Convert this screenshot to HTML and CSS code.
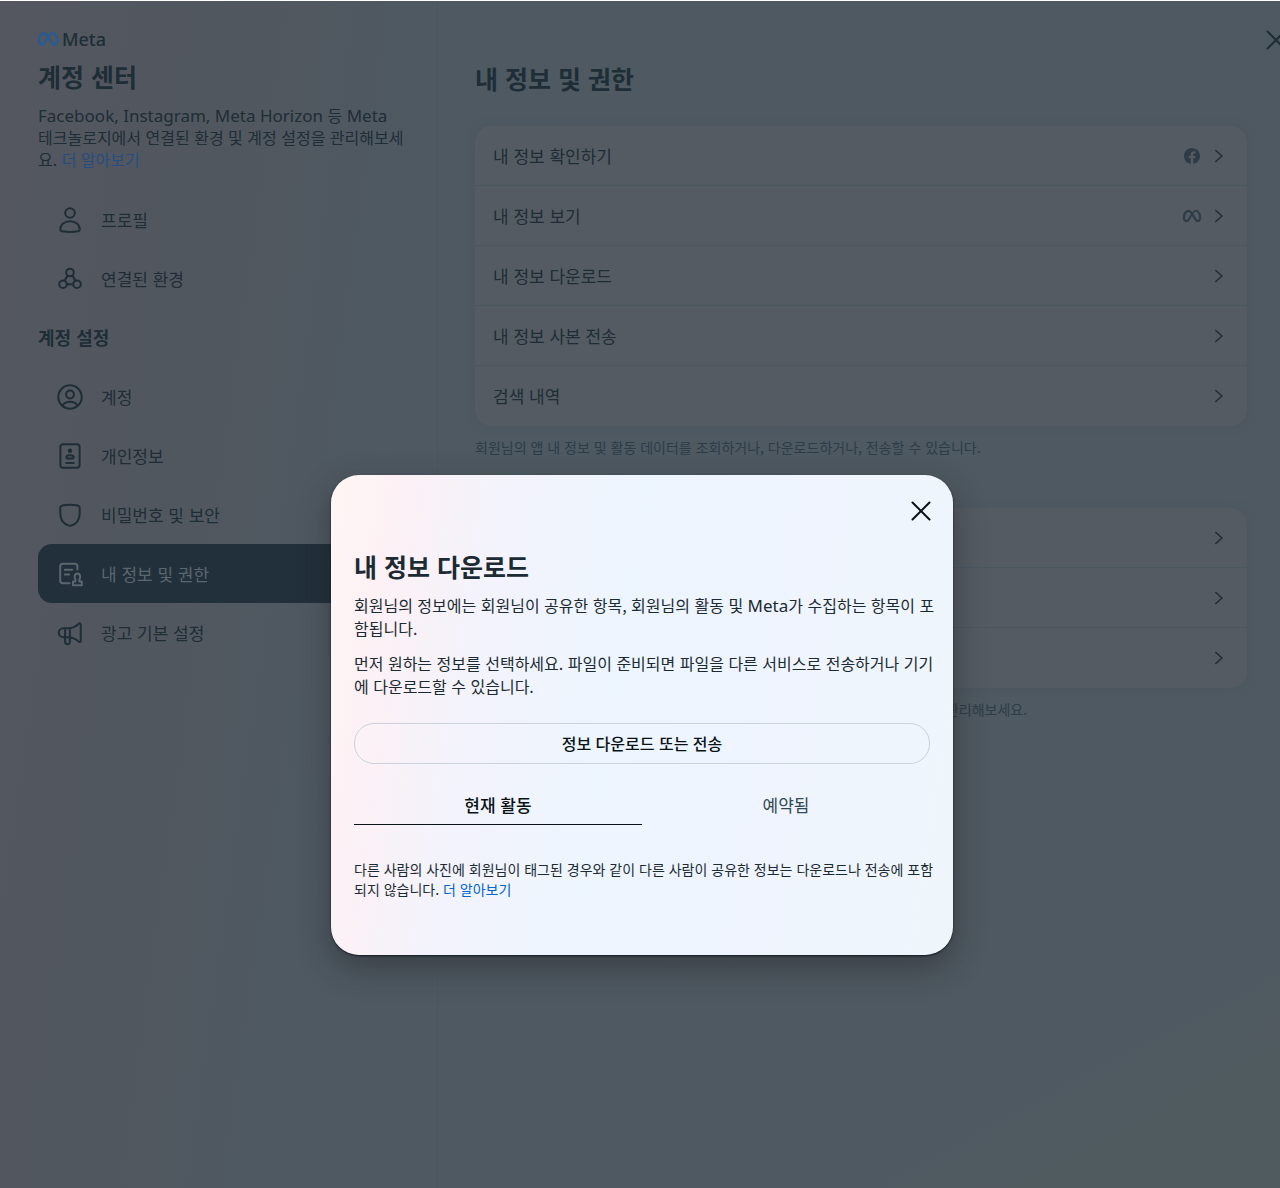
FILE: index.html
```html
<!DOCTYPE html>
<html lang="ko">
<head>
<meta charset="utf-8">
<meta name="viewport" content="width=device-width, initial-scale=1">
<title>계정 센터</title>
<link rel="stylesheet" href="styles.css">
</head>
<body>
<svg class="defs" aria-hidden="true">
  <symbol id="meta" viewBox="0 0 24 24"><path fill="currentColor" stroke="currentColor" stroke-width=".5" d="M6.915 4.03c-1.968 0-3.683 1.28-4.871 3.113C.704 9.208 0 11.883 0 14.449c0 .706.07 1.369.21 1.973a6.624 6.624 0 0 0 .265.86 5.297 5.297 0 0 0 .371.761c.696 1.159 1.818 1.927 3.593 1.927 1.497 0 2.633-.671 3.965-2.444.76-1.012 1.144-1.626 2.663-4.32l.756-1.339.186-.325c.061.1.121.196.183.3l2.152 3.595c.724 1.21 1.665 2.556 2.47 3.314 1.046.987 1.992 1.22 3.06 1.22 1.075 0 1.876-.355 2.455-.843a3.743 3.743 0 0 0 .81-.973c.542-.939.861-2.127.861-3.745 0-2.72-.681-5.357-2.084-7.45-1.282-1.912-2.957-2.93-4.716-2.93-1.047 0-2.088.467-3.053 1.308-.652.57-1.257 1.29-1.82 2.05-.69-.875-1.335-1.547-1.958-2.056-1.182-.966-2.315-1.303-3.454-1.303zm10.16 2.053c1.147 0 2.188.758 2.992 1.999 1.132 1.748 1.647 4.195 1.647 6.4 0 1.548-.368 2.9-1.839 2.9-.58 0-1.027-.23-1.664-1.004-.496-.601-1.343-1.878-2.832-4.358l-.617-1.028a44.908 44.908 0 0 0-1.255-1.98c.07-.109.141-.224.211-.327 1.12-1.667 2.118-2.602 3.358-2.602zm-10.201.553c1.265 0 2.058.791 2.675 1.446.307.327.737.871 1.234 1.579l-1.02 1.566c-.757 1.163-1.882 3.017-2.837 4.338-1.191 1.649-1.81 1.817-2.486 1.817-.524 0-1.038-.237-1.383-.794-.263-.426-.464-1.13-.464-2.046 0-2.221.63-4.535 1.66-6.088.454-.687.964-1.226 1.533-1.533a2.264 2.264 0 0 1 1.088-.285z"/></symbol>
  <symbol id="facebook" viewBox="0 0 24 24"><path fill="currentColor" d="M24 12.073c0-6.627-5.373-12-12-12s-12 5.373-12 12c0 5.99 4.388 10.954 10.125 11.854v-8.385H7.078v-3.47h3.047V9.43c0-3.007 1.792-4.669 4.533-4.669 1.312 0 2.686.235 2.686.235v2.953H15.83c-1.491 0-1.956.925-1.956 1.874v2.25h3.328l-.532 3.47h-2.796v8.385C19.612 23.027 24 18.062 24 12.073z"/></symbol>
  <symbol id="chevron" viewBox="0 0 10 14"><path d="M1.800 1.500 8 7l-6.200 5.500" fill="none" stroke="currentColor" stroke-width="1.500" stroke-linecap="round" stroke-linejoin="round"/></symbol>
  <symbol id="close" viewBox="0 0 20 20"><path d="m1.500 1.500 17 17M18.500 1.500l-17 17" fill="none" stroke="currentColor" stroke-width="2" stroke-linecap="round"/></symbol>
</svg>

<div class="page">
  <aside class="sidebar">
    <div class="brand"><svg><use href="#meta"/></svg><span>Meta</span></div>
    <h1>계정 센터</h1>
    <p class="intro"><span class="latin">Facebook, Instagram, Meta Horizon</span> 등 <span class="latin">Meta</span> 테크놀로지에서 연결된 환경 및 계정 설정을 관리해보세요. <a href="#">더 알아보기</a></p>
    <nav>
      <a class="item" href="#"><svg viewBox="0 0 26 26"><circle cx="13" cy="6" r="4.800"/><path d="M3.300 22.200c0-4.500 4.200-8 9.700-8s9.700 3.500 9.700 8c0 1.300-.8 1.900-2 2.100-5 .8-10.400.8-15.400 0-1.200-.2-2-.8-2-2.100z"/></svg>프로필</a>
      <a class="item" href="#"><svg viewBox="0 0 26 26"><circle cx="13" cy="6.500" r="3.800"/><circle cx="6" cy="18.200" r="3.800"/><circle cx="20" cy="18.200" r="3.800"/><path d="m10.500 9.500-2.900 5.200m7.900-5.200 2.900 5.200M9.800 18.200h6.400"/></svg>연결된 환경</a>
      <h2>계정 설정</h2>
      <a class="item" href="#"><svg viewBox="0 0 26 26"><circle cx="13" cy="13" r="11.700"/><circle cx="13" cy="10.500" r="3.900"/><path d="M5.500 21.500c1.700-2.400 4.300-3.700 7.500-3.700s5.800 1.300 7.500 3.700"/></svg>계정</a>
      <a class="item" href="#"><svg viewBox="0 0 26 26"><rect x="3.400" y="1.300" width="19.200" height="23.400" rx="2.600"/><circle cx="13" cy="7.800" r="2.200" fill="currentColor" stroke="none"/><path d="M9.300 14.300c0-1.300 1.500-2 3.700-2s3.700.7 3.700 2c0 .9-.5 1.200-1.400 1.200h-4.600c-.9 0-1.400-.3-1.400-1.200zM9.300 20h7.400"/></svg>개인정보</a>
      <a class="item" href="#"><svg viewBox="0 0 26 26"><path d="M3.300 5.800c0-1.300.6-1.900 1.800-2.200 5.200-1.100 10.600-1.100 15.800 0 1.200.3 1.800.9 1.800 2.200v5.400c0 6.700-3.400 10.700-8.600 12.400-.8.200-1.400.2-2.200 0-5.200-1.700-8.600-5.700-8.600-12.400z"/></svg>비밀번호 및 보안</a>
      <a class="item active" href="#" aria-current="page"><svg viewBox="0 0 26 26"><path d="M12.500 22.200H5.800a2.600 2.600 0 0 1-2.600-2.600V5.300a2.600 2.600 0 0 1 2.600-2.600h12a2.600 2.600 0 0 1 2.600 2.600v3.200M7.800 8.800h7.400M7.800 13.400h4.400"/><path d="M16 24.200v-3.600h2.400v-2.400c-1.300-1-1.200-5.600 2-5.600s3.300 4.600 2 5.600v2.400h2.400v3.600z"/></svg>내 정보 및 권한</a>
      <a class="item" href="#"><svg viewBox="0 0 26 26"><path d="M8 8.300h2.500c4.600 0 8.300-1.400 11.200-4.500.9-.9 2-.5 2 .7v16.400c0 1.200-1.100 1.600-2 .7-2.900-3-6.600-4.400-11.200-4.400H6.200a4.400 4.400 0 0 1 0-8.900zM12.900 8.300v13.500a2.400 2.400 0 0 1-4.800 0V8.300"/></svg>광고 기본 설정</a>
    </nav>
  </aside>

  <main>
    <button class="page-close" type="button" aria-label="닫기"><svg><use href="#close"/></svg></button>
    <h1>내 정보 및 권한</h1>
    <section class="group">
      <div class="card">
        <a class="row" href="#"><span>내 정보 확인하기</span><svg class="source"><use href="#facebook"/></svg><svg class="chevron"><use href="#chevron"/></svg></a>
        <a class="row" href="#"><span>내 정보 보기</span><svg class="source wide"><use href="#meta"/></svg><svg class="chevron"><use href="#chevron"/></svg></a>
        <a class="row" href="#"><span>내 정보 다운로드</span><svg class="chevron"><use href="#chevron"/></svg></a>
        <a class="row" href="#"><span>내 정보 사본 전송</span><svg class="chevron"><use href="#chevron"/></svg></a>
        <a class="row" href="#"><span>검색 내역</span><svg class="chevron"><use href="#chevron"/></svg></a>
      </div>
      <p class="note">회원님의 앱 내 정보 및 활동 데이터를 조회하거나, 다운로드하거나, 전송할 수 있습니다.</p>
    </section>
    <section class="group">
      <div class="card">
        <a class="row" href="#"><span></span><svg class="chevron"><use href="#chevron"/></svg></a>
        <a class="row" href="#"><span></span><svg class="chevron"><use href="#chevron"/></svg></a>
        <a class="row" href="#"><span></span><svg class="chevron"><use href="#chevron"/></svg></a>
      </div>
      <p class="note tail">관리해보세요.</p>
    </section>
  </main>

  <div class="overlay">
    <div class="modal" role="dialog" aria-modal="true" aria-labelledby="modal-title">
      <button class="modal-close" type="button" aria-label="닫기"><svg><use href="#close"/></svg></button>
      <h2 id="modal-title">내 정보 다운로드</h2>
      <p>회원님의 정보에는 회원님이 공유한 항목, 회원님의 활동 및 <span class="latin">Meta</span>가 수집하는 항목이 포함됩니다.</p>
      <p>먼저 원하는 정보를 선택하세요. 파일이 준비되면 파일을 다른 서비스로 전송하거나 기기에 다운로드할 수 있습니다.</p>
      <button class="primary" type="button">정보 다운로드 또는 전송</button>
      <div class="tabs" role="tablist">
        <button type="button" role="tab" aria-selected="true">현재 활동</button>
        <button type="button" role="tab" aria-selected="false">예약됨</button>
      </div>
      <p class="small">다른 사람의 사진에 회원님이 태그된 경우와 같이 다른 사람이 공유한 정보는 다운로드나 전송에 포함되지 않습니다. <a href="#">더 알아보기</a></p>
    </div>
  </div>
</div>
</body>
</html>
```
FILE: styles.css
```css
:root {
  --ink: #1e2d36;
  --muted: #2d3c47;
  --line: #4a5761;
  --link: #274c80;
}

* { box-sizing: border-box; }

body {
  margin: 0;
  font-family: "Noto Sans CJK KR", "Noto Sans", sans-serif;
  font-size: 16px;
  line-height: 22px;
  color: var(--ink);
  word-break: break-all;
}

h1, h2, p { margin: 0; }
a { color: inherit; text-decoration: none; }
svg { display: block; flex: none; overflow: visible; }
symbol { overflow: visible; }
button {
  font: inherit;
  color: inherit;
  background: none;
  border: 0;
  padding: 0;
  cursor: pointer;
}

.defs { position: absolute; width: 0; height: 0; }
.latin { font-family: "Noto Sans", sans-serif; font-size: 17px; line-height: 1; }

.page {
  position: relative;
  display: grid;
  grid-template-columns: 438px 1fr;
  min-height: 100vh;
  overflow: hidden;
  border-top: 1px solid #fff;
  background:
    linear-gradient(332deg, #505b5f 0, #505b5f 6%, rgba(80, 91, 95, 0) 12%),
    linear-gradient(98deg, #54575f 0, #51575f 17%, #4e5962 31%, #4f5961 100%);
}

h1 { font-size: 25px; line-height: 36px; font-weight: 700; }

.sidebar {
  padding: 26px 33px 26px 38px;
  border-right: 1px solid var(--line);
}
.brand {
  display: flex;
  align-items: center;
  gap: 4px;
  height: 24px;
  margin-bottom: 7px;
  font: 500 18px/24px "Noto Sans", sans-serif;
}
.brand svg { width: 20px; height: 20px; color: #2a5a94; }
.sidebar h1 { margin-bottom: 10px; }
.intro a { color: var(--link); }
nav { margin-top: 20px; }
nav h2 { font-size: 18px; line-height: 59px; font-weight: 700; }
.item {
  display: flex;
  align-items: center;
  gap: 18px;
  height: 59px;
  padding: 0 19px;
  border-radius: 14px;
  font-size: 17px;
}
.item svg {
  width: 26px;
  height: 26px;
  fill: none;
  stroke: currentColor;
  stroke-width: 2;
  stroke-linecap: round;
  stroke-linejoin: round;
}
.active { background: #22303b; color: #5b666d; }

main { position: relative; padding: 59px 33px 60px 37px; }
.page-close { position: absolute; top: 29px; right: -6px; }
.page-close svg, .modal-close svg { width: 20px; height: 20px; }

.group { margin-top: 30px; }
.group + .group { margin-top: 50px; }
.card {
  border-radius: 16px;
  background: #545b62;
  box-shadow: 0 0 8px #4b565f;
}
.row {
  display: flex;
  align-items: center;
  gap: 14px;
  height: 60px;
  padding: 0 23px 0 18px;
  font-size: 17px;
}
.row:not(:last-child) { border-bottom: 1px solid var(--line); }
.row span { flex: 1; }
.chevron { width: 10px; height: 14px; }
.source { width: 16px; height: 16px; color: var(--muted); }
.source.wide { width: 18px; height: 18px; margin-right: -1px; }
.note {
  margin-top: 10px;
  font-size: 14px;
  line-height: 22px;
  color: var(--muted);
}
.tail { padding-left: 61%; }

.overlay {
  position: absolute;
  inset: 0;
  display: flex;
  align-items: flex-start;
  justify-content: center;
  padding: 474px 0 24px 4px;
}
.modal {
  display: flex;
  flex-direction: column;
  width: 622px;
  max-width: 100%;
  min-height: 480px;
  padding: 26px 23px 54px;
  border-radius: 28px;
  color: #1c2b33;
  background: linear-gradient(99deg, #fff6f4 0, #fdf1f5 9%, #f3f3fc 25%, #edf5fe 45%, #eff4fe 70%, #eff6fb 100%);
  box-shadow: 0 1px 2px #101a20, 0 12px 32px rgba(30, 30, 30, .45);
}
.modal-close { align-self: flex-end; margin-right: -1px; color: #0a1317; }
.modal h2 { margin-top: 27px; font-size: 25px; line-height: 36px; font-weight: 700; }
.modal p { margin-top: 12px; margin-right: -8px; line-height: 23px; }
.modal h2 + p { margin-top: 10px; }
.primary {
  height: 41px;
  margin-top: 25px;
  padding-bottom: 2px;
  border: 1px solid #c9d1db;
  border-radius: 20px;
  font-weight: 500;
  color: #0a1317;
}
.tabs { display: grid; grid-template-columns: 1fr 1fr; margin-top: 24px; }
.tabs button {
  height: 37px;
  padding-bottom: 2px;
  border-bottom: 1px solid transparent;
  font-size: 17px;
  color: #344854;
}
.tabs button[aria-selected="true"] {
  border-color: #0a1317;
  font-weight: 500;
  color: #0a1317;
}
.modal .small { margin-top: 34px; font-size: 14px; line-height: 20px; }
.small a { color: #0064d1; }
```
